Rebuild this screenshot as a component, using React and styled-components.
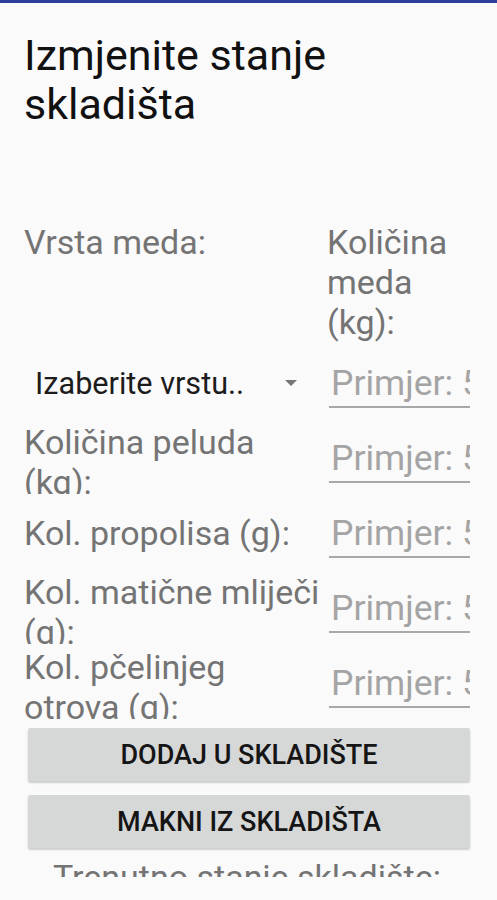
import React from 'react';
import styled, { createGlobalStyle } from 'styled-components';

const GlobalStyle = createGlobalStyle`
  html, body {
    margin: 0;
    padding: 0;
    background: #fafafa;
  }
  * {
    box-sizing: border-box;
  }
`;

const rows = [
  { label: 'Količina peluda (kg):' },
  { label: 'Kol. propolisa (g):' },
  { label: 'Kol. matične mliječi (g):' },
  { label: 'Kol. pčelinjeg otrova (g):' },
];

export default function App() {
  return (
    <Screen>
      <GlobalStyle />
      <TopBar />
      <Scroll>
        <Title>Izmjenite stanje skladišta</Title>
        <Form>
          <Row $h={125}>
            <HeadLabel>Vrsta meda:</HeadLabel>
            <HeadLabel>Količina meda (kg):</HeadLabel>
          </Row>
          <Row>
            <Cell $row>
              <SpinnerText>Izaberite vrstu..</SpinnerText>
              <Arrow />
            </Cell>
            <Field placeholder="Primjer: 5" />
          </Row>
          {rows.map(r => (
            <Row key={r.label}>
              <Cell>
                <Label>{r.label}</Label>
              </Cell>
              <Field placeholder="Primjer: 5" />
            </Row>
          ))}
        </Form>
        <Buttons>
          <Button>DODAJ U SKLADIŠTE</Button>
          <Button>MAKNI IZ SKLADIŠTA</Button>
        </Buttons>
        <Status>Trenutno stanje skladište:</Status>
      </Scroll>
    </Screen>
  );
}

const Screen = styled.div`
  height: 900px;
  display: flex;
  flex-direction: column;
  background: #fafafa;
  font-family: Roboto, 'Liberation Sans', sans-serif;
`;

const TopBar = styled.div`
  flex: none;
  height: 3px;
  background: #2f3d9c;
`;

const Scroll = styled.main`
  height: 874px;
  overflow: hidden;
  padding: 28px 27px 0 24px;
`;

const Title = styled.h1`
  margin: 0;
  font-size: 43px;
  line-height: 49px;
  font-weight: 400;
  color: #111;
`;

const Form = styled.div`
  margin-top: 93px;
`;

const Row = styled.div`
  display: grid;
  grid-template-columns: 303px 1fr;
  height: ${p => p.$h || 75}px;
`;

const Cell = styled.div`
  height: 72px;
  overflow: hidden;
  display: flex;
  flex-direction: ${p => (p.$row ? 'row' : 'column')};
  align-items: ${p => (p.$row ? 'center' : 'stretch')};
`;

const Label = styled.span`
  margin: auto 0;
  font-size: 34px;
  line-height: 40px;
  color: #747474;
`;

const HeadLabel = styled(Label)`
  margin: 0;
`;

const SpinnerText = styled.span`
  padding-left: 11px;
  font-size: 30.6px;
  color: #1c1c1c;
`;

const Arrow = styled.span`
  margin-left: auto;
  margin-right: 30px;
  width: 0;
  height: 0;
  border-left: 6px solid transparent;
  border-right: 6px solid transparent;
  border-top: 6px solid #777;
`;

const Field = styled.input`
  width: 141px;
  height: 48px;
  margin: 13px 0 0 2px;
  padding: 0 0 0 2px;
  border: none;
  border-bottom: 2px solid #a8a8a8;
  background: transparent;
  outline: none;
  font-family: inherit;
  font-size: 35.5px;
  color: #1c1c1c;
  &::placeholder {
    color: #a4a4a4;
  }
`;

const Buttons = styled.div`
  display: flex;
  flex-direction: column;
  gap: 14px;
  margin: 6px 0 0 4px;
`;

const Button = styled.button`
  height: 53px;
  border: none;
  border-radius: 2px;
  background: #d6d7d7;
  box-shadow: 0 2px 2px rgba(0, 0, 0, 0.18);
  font-family: inherit;
  font-size: 27px;
  font-weight: 500;
  color: #151515;
  cursor: pointer;
`;

const Status = styled.p`
  margin: 9px 0 0;
  text-align: center;
  font-size: 34px;
  line-height: 40px;
  color: #747474;
`;
